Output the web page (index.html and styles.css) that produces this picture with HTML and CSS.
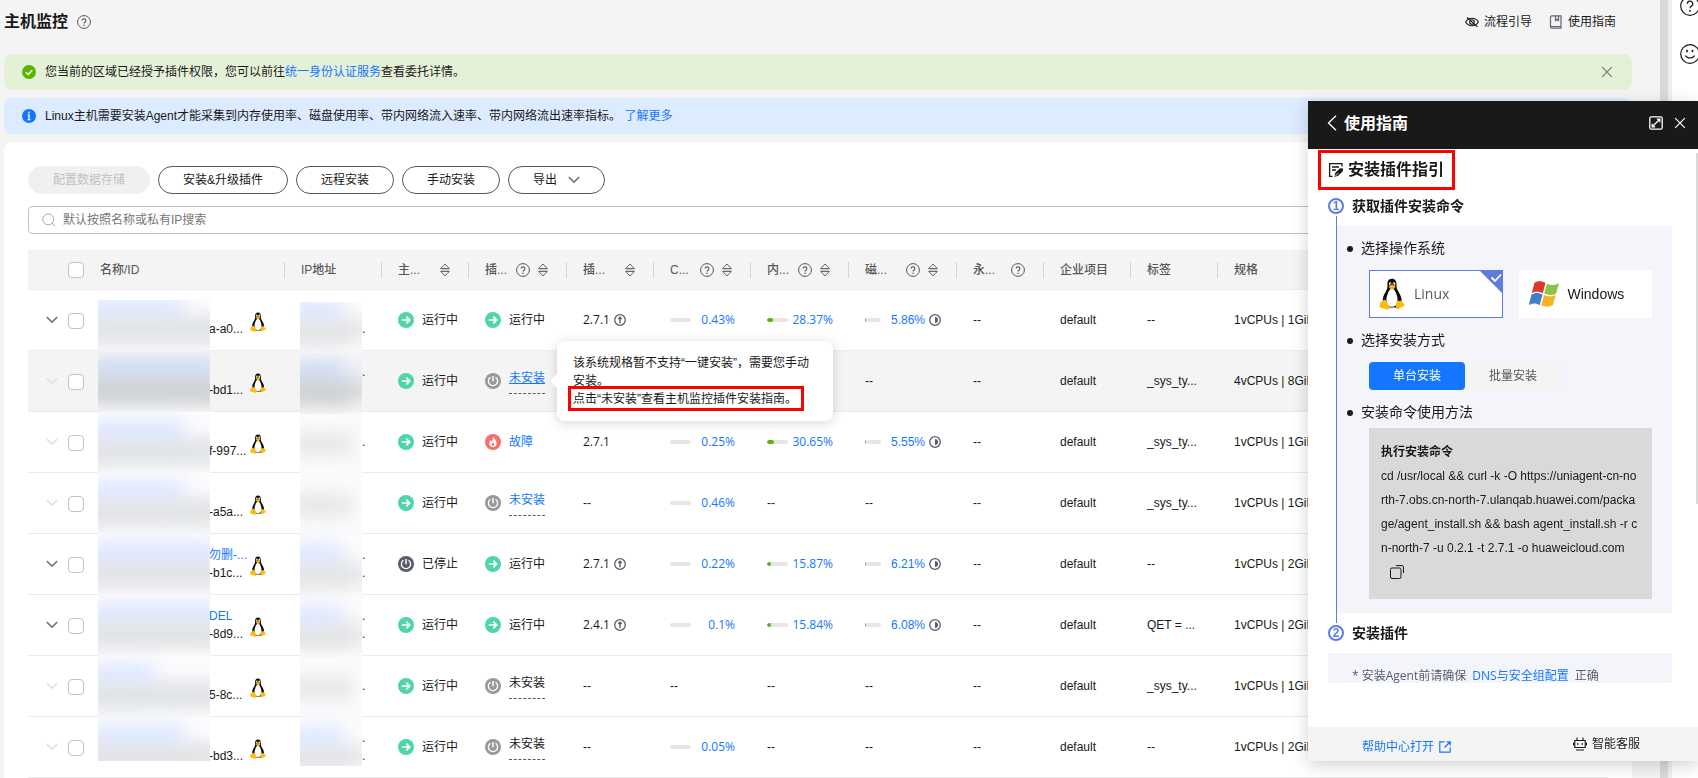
FILE: index.html
```
<!DOCTYPE html>
<html lang="zh-CN">
<head>
<meta charset="utf-8">
<title>主机监控</title>
<link rel="stylesheet" href="styles.css">
</head>
<body>
<svg class="sprite" aria-hidden="true">
  <symbol id="help" viewBox="0 0 14 14"><circle cx="7" cy="7" r="6.4" fill="none" stroke="currentColor"/><path d="M5.2 5.6a1.8 1.8 0 1 1 2.7 1.6c-.6.35-.9.7-.9 1.3" fill="none" stroke="currentColor" stroke-width="1.1"/><circle cx="7" cy="10.3" r=".75" fill="currentColor"/></symbol>
  <symbol id="sort" viewBox="0 0 10 14"><path d="M5 1 9.300 5.500H.7zM5 13 .7 8.500h8.600z" fill="none" stroke="currentColor" stroke-width=".9"/><path d="M.5 7h9" stroke="#aaa"/></symbol>
  <symbol id="down" viewBox="0 0 12 8"><path d="M.8 1.2 6 6.2l5.200-5" fill="none" stroke="currentColor" stroke-width="1.600"/></symbol>
  <symbol id="close" viewBox="0 0 12 12"><path d="M1.200 1.200l9.600 9.600M10.800 1.200 1.200 10.800" fill="none" stroke="currentColor" stroke-width="1.200"/></symbol>
  <symbol id="run" viewBox="0 0 16 16"><circle cx="8" cy="8" r="8" fill="#50d4ab"/><path d="M3.800 8h7.600M8.300 4.600 11.700 8l-3.400 3.400" fill="none" stroke="#fff" stroke-width="1.700"/></symbol>
  <symbol id="off" viewBox="0 0 16 16"><circle cx="8" cy="8" r="8" fill="currentColor"/><path d="M5.400 4.300a4.600 4.600 0 1 0 5.200 0" fill="none" stroke="#fff" stroke-width="1.300"/><path d="M8 3v5.200" stroke="#fff" stroke-width="1.500"/></symbol>
  <symbol id="fault" viewBox="0 0 16 16"><circle cx="8" cy="8" r="8" fill="#f66f6a"/><path d="M8.300 2.500c.3 2 3.400 3.700 3.400 6.800a3.700 3.700 0 0 1-7.400 0c0-1.600.9-2.700 1.600-3.300.2 1 .5 1.300.9 1.500.9-1.500 1.300-3 1.500-5z" fill="#fff"/><path d="M8.200 8.300c.2.9 1.100 1.200 1.100 2.300a1.300 1.300 0 0 1-2.600 0c0-1 .9-1.200 1.500-2.300z" fill="#f66f6a"/></symbol>
  <symbol id="up" viewBox="0 0 12 12"><circle cx="6" cy="6" r="5.300" fill="none" stroke="#575d6c" stroke-width="1.300"/><path d="M6 9.300V3.300M4.300 5 6 3.200 7.700 5" fill="none" stroke="#575d6c" stroke-width="1.400"/></symbol>
  <symbol id="half" viewBox="0 0 12 12"><circle cx="6" cy="6" r="5.300" fill="none" stroke="#575d6c" stroke-width="1.300"/><path d="M6 3a3 3 0 0 1 0 6z" fill="#575d6c"/></symbol>
  <symbol id="tux" viewBox="0 0 32 40"><path d="M16 1c-4.500 0-6 3.500-5.700 7.500.2 4-.3 5.500-2.300 9C5.500 21.500 4 25 4.500 30L10 37h12l6-7c.3-5-1.500-9-4-13-2-3.200-2.300-4.500-2.300-8.500C21.700 4 20 1 16 1z" fill="#0b0b0b"/><path d="M16 13c-3 1-4 3-5.200 6.500C9 24 8 28 10 33c3 4 9 4 12 0 1.800-4.500 1-9-.8-13.500C20 16 19 14 16 13z" fill="#fff"/><ellipse cx="13.700" cy="7.400" rx="1.600" ry="2.200" fill="#fff"/><ellipse cx="18.500" cy="7.400" rx="1.800" ry="2.200" fill="#fff"/><circle cx="14.200" cy="7.800" r=".8"/><circle cx="18" cy="7.800" r=".8"/><path d="M12 10.700c2-1.800 3.500-2.300 4.500-2 1.700.3 2.800 1 4 2-.8 2.500-2.700 3.800-4.500 3.800S12.700 13 12 10.700z" fill="#f5b30a"/><path d="M5.500 27.500c2.500-.8 3.500 1.500 5 4 1.400 2.400 3.600 4.400 2.500 6.500-1 2-4 1.300-6.500.3-2.200-.8-5.500-.8-6-2.300-.4-1.500.7-2.600.6-4.200 0-1.600 2-1.200 4.400-4.300zM21.500 31c.2-1.700 1-3.200 2.500-2.600 2 .9 3.700-.7 4.300.6.700 2 3.500 3 3.400 4.600-.2 1.500-3.200 2-5 3.600-1.700 1.500-3.700 2.300-5 .9-1.300-1.500-.4-4.500-.2-7.100z" fill="#fbbc0c"/></symbol>
</svg>

<main class="page">
  <header class="top">
    <h1>主机监控</h1>
    <svg class="i14 dim"><use href="#help"/></svg>
    <nav class="top-links">
      <a href="#"><svg class="i14" viewBox="0 0 14 14" fill="none" stroke="currentColor" stroke-width="1.100"><path d="M.6 7C3.500 2 10.500 2 13.400 7 10.500 12 3.500 12 .6 7z"/><circle cx="7" cy="7" r="2.300"/><path d="M2 2.500l10.500 9.300"/></svg>流程引导</a>
      <a href="#"><svg class="i14" viewBox="0 0 14 14" fill="none" stroke="#5f6570" stroke-width="1.200"><path d="M12 13.200H2.800A1.300 1.300 0 0 1 1.500 12V2A1.300 1.300 0 0 1 2.800.8H12zM1.500 11.500h10.500M6.500 1v4.500L8 4.300l1.500 1.200V1"/></svg>使用指南</a>
    </nav>
  </header>

  <section class="banner ok">
    <svg class="i14" viewBox="0 0 14 14"><circle cx="7" cy="7" r="7" fill="#5cb300"/><path d="M3.800 7.200 6.200 9.500l4.200-4.200" fill="none" stroke="#fff" stroke-width="1.400"/></svg>
    <p>您当前的区域已经授予插件权限，您可以前往<a href="#">统一身份认证服务</a>查看委托详情。</p>
    <button class="bare" aria-label="关闭"><svg class="i12"><use href="#close"/></svg></button>
  </section>
  <section class="banner info">
    <svg class="i14" viewBox="0 0 14 14"><circle cx="7" cy="7" r="7" fill="#1476ff"/><path d="M7 2.800v1.600M7 5.600v5.200M5.800 6h1.200M5.600 10.700h2.800" stroke="#fff" stroke-width="1.300"/></svg>
    <p>Linux主机需要安装Agent才能采集到内存使用率、磁盘使用率、带内网络流入速率、带内网络流出速率指标。 <a href="#">了解更多</a></p>
  </section>

  <section class="card">
    <div class="tools">
      <button class="pill" disabled>配置数据存储</button>
      <button class="pill">安装&amp;升级插件</button>
      <button class="pill">远程安装</button>
      <button class="pill">手动安装</button>
      <button class="pill">导出<svg class="chev"><use href="#down"/></svg></button>
    </div>
    <label class="search">
      <svg class="i14" viewBox="0 0 14 14" fill="none" stroke="#aaa"><circle cx="6.300" cy="6.300" r="5.500"/><path d="M10.200 10.200l3 3"/></svg>
      <input type="text" aria-label="搜索" placeholder="默认按照名称或私有IP搜索">
    </label>

    <div class="table-wrap">
      <table>
        <colgroup><col class="w-exp"><col class="w-chk"><col class="w-name"><col class="w-b"><col class="w-a"><col class="w-c"><col class="w-a"><col class="w-b"><col class="w-c"><col class="w-d"><col class="w-a"><col class="w-a"><col class="w-a"><col></colgroup>
        <thead>
          <tr>
            <th></th>
            <th class="chk"><input type="checkbox" aria-label="全选"></th>
            <th><div>名称/ID</div></th>
            <th><div>IP地址</div></th>
            <th><div>主...<span></span><svg class="sort"><use href="#sort"/></svg></div></th>
            <th><div>插...<span></span><svg class="i14"><use href="#help"/></svg><svg class="sort"><use href="#sort"/></svg></div></th>
            <th><div>插...<span></span><svg class="sort"><use href="#sort"/></svg></div></th>
            <th><div>C...<span></span><svg class="i14"><use href="#help"/></svg><svg class="sort"><use href="#sort"/></svg></div></th>
            <th><div>内...<span></span><svg class="i14"><use href="#help"/></svg><svg class="sort"><use href="#sort"/></svg></div></th>
            <th><div>磁...<span></span><svg class="i14"><use href="#help"/></svg><svg class="sort"><use href="#sort"/></svg></div></th>
            <th><div>永...<span></span><svg class="i14"><use href="#help"/></svg></div></th>
            <th><div>企业项目</div></th>
            <th><div>标签</div></th>
            <th class="last"><div>规格</div></th>
          </tr>
        </thead>
        <tbody>
          <tr>
            <td class="exp on"><svg class="chev"><use href="#down"/></svg></td>
            <td class="chk"><input type="checkbox" aria-label="选择主机1"></td>
            <td class="name"><div><p><br>a-a0...</p><svg class="tux"><use href="#tux"/></svg></div></td>
            <td class="ip"><br>.</td>
            <td><div class="st"><svg class="i16"><use href="#run"/></svg>运行中</div></td>
            <td><div class="st"><svg class="i16"><use href="#run"/></svg>运行中</div></td>
            <td><div class="ver">2.7.1<svg class="i12"><use href="#up"/></svg></div></td>
            <td><div class="use cpu"><i></i><a href="#">0.43%</a></div></td>
            <td><div class="use mem"><i><b style="width:28%"></b></i><a href="#">28.37%</a></div></td>
            <td><div class="use disk"><i><b style="width:6%"></b></i><a href="#">5.86%</a><svg class="i12"><use href="#half"/></svg></div></td>
            <td>--</td><td>default</td><td>--</td><td>1vCPUs | 1GiB</td>
          </tr>
          <tr class="hover">
            <td class="exp"><svg class="chev"><use href="#down"/></svg></td>
            <td class="chk"><input type="checkbox" aria-label="选择主机2"></td>
            <td class="name"><div><p><br>-bd1...</p><svg class="tux"><use href="#tux"/></svg></div></td>
            <td class="ip">.<br>&nbsp;</td>
            <td><div class="st"><svg class="i16"><use href="#run"/></svg>运行中</div></td>
            <td><div class="st"><svg class="i16 gray"><use href="#off"/></svg><span class="dash"><a class="lined" href="#">未安装</a></span>
              <div class="pop" role="tooltip">该系统规格暂不支持“一键安装”，需要您手动安装。<br>点击“未安装”查看主机监控插件安装指南。<span class="mark"></span></div></div></td>
            <td></td><td></td><td></td><td>--</td>
            <td>--</td><td>default</td><td>_sys_ty...</td><td>4vCPUs | 8GiB</td>
          </tr>
          <tr>
            <td class="exp"><svg class="chev"><use href="#down"/></svg></td>
            <td class="chk"><input type="checkbox" aria-label="选择主机3"></td>
            <td class="name"><div><p><br>f-997...</p><svg class="tux"><use href="#tux"/></svg></div></td>
            <td class="ip">.</td>
            <td><div class="st"><svg class="i16"><use href="#run"/></svg>运行中</div></td>
            <td><div class="st"><svg class="i16"><use href="#fault"/></svg><a href="#">故障</a></div></td>
            <td><div class="ver">2.7.1</div></td>
            <td><div class="use cpu"><i></i><a href="#">0.25%</a></div></td>
            <td><div class="use mem"><i><b style="width:31%"></b></i><a href="#">30.65%</a></div></td>
            <td><div class="use disk"><i><b style="width:6%"></b></i><a href="#">5.55%</a><svg class="i12"><use href="#half"/></svg></div></td>
            <td>--</td><td>default</td><td>_sys_ty...</td><td>1vCPUs | 1GiB</td>
          </tr>
          <tr>
            <td class="exp"><svg class="chev"><use href="#down"/></svg></td>
            <td class="chk"><input type="checkbox" aria-label="选择主机4"></td>
            <td class="name"><div><p><br>-a5a...</p><svg class="tux"><use href="#tux"/></svg></div></td>
            <td></td>
            <td><div class="st"><svg class="i16"><use href="#run"/></svg>运行中</div></td>
            <td><div class="st"><svg class="i16 gray"><use href="#off"/></svg><span class="dash"><a href="#">未安装</a></span></div></td>
            <td>--</td>
            <td><div class="use cpu"><i></i><a href="#">0.46%</a></div></td>
            <td>--</td><td>--</td>
            <td>--</td><td>default</td><td>_sys_ty...</td><td>1vCPUs | 1GiB</td>
          </tr>
          <tr>
            <td class="exp on"><svg class="chev"><use href="#down"/></svg></td>
            <td class="chk"><input type="checkbox" aria-label="选择主机5"></td>
            <td class="name"><div><p><a href="#">勿删-...</a><br>-b1c...</p><svg class="tux"><use href="#tux"/></svg></div></td>
            <td class="ip">.<br>.</td>
            <td><div class="st"><svg class="i16 dark"><use href="#off"/></svg>已停止</div></td>
            <td><div class="st"><svg class="i16"><use href="#run"/></svg>运行中</div></td>
            <td><div class="ver">2.7.1<svg class="i12"><use href="#up"/></svg></div></td>
            <td><div class="use cpu"><i></i><a href="#">0.22%</a></div></td>
            <td><div class="use mem"><i><b style="width:16%"></b></i><a href="#">15.87%</a></div></td>
            <td><div class="use disk"><i><b style="width:6%"></b></i><a href="#">6.21%</a><svg class="i12"><use href="#half"/></svg></div></td>
            <td>--</td><td>default</td><td>--</td><td>1vCPUs | 2GiB</td>
          </tr>
          <tr>
            <td class="exp on"><svg class="chev"><use href="#down"/></svg></td>
            <td class="chk"><input type="checkbox" aria-label="选择主机6"></td>
            <td class="name"><div><p><a href="#">DEL</a><br>-8d9...</p><svg class="tux"><use href="#tux"/></svg></div></td>
            <td class="ip">.<br>.</td>
            <td><div class="st"><svg class="i16"><use href="#run"/></svg>运行中</div></td>
            <td><div class="st"><svg class="i16"><use href="#run"/></svg>运行中</div></td>
            <td><div class="ver">2.4.1<svg class="i12"><use href="#up"/></svg></div></td>
            <td><div class="use cpu"><i></i><a href="#">0.1%</a></div></td>
            <td><div class="use mem"><i><b style="width:16%"></b></i><a href="#">15.84%</a></div></td>
            <td><div class="use disk"><i><b style="width:6%"></b></i><a href="#">6.08%</a><svg class="i12"><use href="#half"/></svg></div></td>
            <td>--</td><td>default</td><td>QET = ...</td><td>1vCPUs | 2GiB</td>
          </tr>
          <tr>
            <td class="exp"><svg class="chev"><use href="#down"/></svg></td>
            <td class="chk"><input type="checkbox" aria-label="选择主机7"></td>
            <td class="name"><div><p><br>5-8c...</p><svg class="tux"><use href="#tux"/></svg></div></td>
            <td class="ip">.</td>
            <td><div class="st"><svg class="i16"><use href="#run"/></svg>运行中</div></td>
            <td><div class="st"><svg class="i16 gray"><use href="#off"/></svg><span class="dash">未安装</span></div></td>
            <td>--</td><td>--</td><td>--</td><td>--</td>
            <td>--</td><td>default</td><td>_sys_ty...</td><td>1vCPUs | 1GiB</td>
          </tr>
          <tr>
            <td class="exp"><svg class="chev"><use href="#down"/></svg></td>
            <td class="chk"><input type="checkbox" aria-label="选择主机8"></td>
            <td class="name"><div><p><br>-bd3...</p><svg class="tux"><use href="#tux"/></svg></div></td>
            <td class="ip">.<br>.</td>
            <td><div class="st"><svg class="i16"><use href="#run"/></svg>运行中</div></td>
            <td><div class="st"><svg class="i16 gray"><use href="#off"/></svg><span class="dash">未安装</span></div></td>
            <td>--</td>
            <td><div class="use cpu"><i></i><a href="#">0.05%</a></div></td>
            <td>--</td><td>--</td>
            <td>--</td><td>default</td><td>--</td><td>1vCPUs | 2GiB</td>
          </tr>
        </tbody>
      </table>
      <div class="veil veil-name" aria-hidden="true">
        <div><i class="m"></i><b></b></div><div class="deep"><i class="l"></i><b></b></div><div><i class="m"></i><b></b></div><div><i class="m"></i><b></b></div><div><i class="l"></i><b></b></div><div><i class="l"></i><b></b></div><div><i class="s"></i><b></b></div><div><i class="m"></i><b></b></div>
      </div>
      <div class="veil veil-ip" aria-hidden="true">
        <div><i class="m"></i><b></b></div><div class="deep"><i class="m"></i><b></b></div><div class="one"><b></b></div><div class="one"><b></b></div><div><i class="m"></i><b></b></div><div><i class="m"></i><b></b></div><div class="one"><b></b></div><div><i class="m"></i><b></b></div>
      </div>
    </div>
  </section>
</main>
<div class="track" aria-hidden="true"></div>
<aside class="rail">
  <svg viewBox="0 0 20 20"><circle cx="10" cy="10" r="9.300" fill="none" stroke="#191919" stroke-width="1.200"/><path d="M7.300 7.800a2.700 2.700 0 1 1 4 2.400c-.9.500-1.300 1-1.300 2" fill="none" stroke="#191919" stroke-width="1.300"/><circle cx="10" cy="14.800" r=".9"/></svg>
  <svg viewBox="0 0 20 20"><circle cx="10" cy="10" r="9.300" fill="none" stroke="#191919" stroke-width="1.200"/><path d="M5.500 11.500c1.500 3.300 7.500 3.300 9 0" fill="none" stroke="#191919" stroke-width="1.200"/><path d="M7 5.800v2.400M12.500 5.800v2.400" stroke="#191919" stroke-width="1.600"/></svg>
</aside>

<aside class="guide">
  <header class="guide-head">
    <button class="bare" aria-label="返回"><svg class="back" viewBox="0 0 10 16"><path d="M9 .8 1.500 8 9 15.200" fill="none" stroke="#fff" stroke-width="1.300"/></svg></button>
    <h2>使用指南</h2>
    <button class="bare" aria-label="展开"><svg class="i14" viewBox="0 0 14 14" fill="none" stroke="#fff" stroke-width="1.300"><rect x=".8" y=".8" width="12.400" height="12.400" rx="1.500"/><path d="M7.800 3.200h3v3M6.200 10.800h-3v-3M10.500 3.500 3.500 10.500"/></svg></button>
    <button class="bare" aria-label="关闭"><svg class="i12"><use href="#close"/></svg></button>
  </header>
  <div class="guide-body">
    <h3><svg class="i16" viewBox="0 0 16 16"><path d="M14 4.500V1.600H1.600v12.800H4.500M4 5h7M4 8h4" fill="none" stroke="#191919" stroke-width="1.300"/><path d="M6.300 15l1-4.200L12 6.200l3.200.2-.6 3.200-4.400 4.200z" fill="#191919"/><path d="M7 14.400l3.200-3.200" stroke="#fff" stroke-width=".9"/></svg>安装插件指引</h3>
    <div class="step"><span class="num">1</span><h4>获取插件安装命令</h4></div>
    <div class="step-body">
      <h5>选择操作系统</h5>
      <div class="os-list">
        <button class="os sel"><svg class="tux-l"><use href="#tux"/></svg>Linux<svg class="corner" viewBox="0 0 24 24"><path d="M0 0h24v24z" fill="#5e7ce0"/><path d="M12.500 7.500l3.500 3.500 6-6.500" fill="none" stroke="#fff" stroke-width="1.800"/></svg></button>
        <button class="os"><svg class="win" viewBox="0 0 30 26"><path d="M5.500 1.800C9-.5 13 0 16.500 1.800l-2.700 10.400C10.500 10.300 6.500 10 2.800 12.200z" fill="#dc3832"/><path d="M18 2.800c4 1.800 8 1.600 12-.6l-2.800 10.200c-4 2.200-8 2-12 .1z" fill="#8fc048"/><path d="M2.500 13.500c3.700-2.200 7.500-2 11 0L10.800 24C7.500 22 3.500 21.800-.2 24z" fill="#3f7fc4"/><path d="M15 14c3.800 2 7.800 2 11.800-.2L24 24c-3.800 2.200-8 2.200-11.700.2z" fill="#f6b324"/></svg>Windows</button>
      </div>
      <h5>选择安装方式</h5>
      <div class="modes"><button class="sel">单台安装</button><button>批量安装</button></div>
      <h5 class="tight">安装命令使用方法</h5>
      <div class="cmd">
        <strong>执行安装命令</strong>
        <p>cd /usr/local &amp;&amp; curl -k -O https://uniagent-cn-north-7.obs.cn-north-7.ulanqab.huawei.com/package/agent_install.sh &amp;&amp; bash agent_install.sh -r cn-north-7 -u 0.2.1 -t 2.7.1 -o huaweicloud.com</p>
        <button class="bare" aria-label="复制"><svg class="i14" viewBox="0 0 14 14" fill="none" stroke="#191919"><rect x=".5" y="3" width="10.500" height="10.500" rx="1.500"/><path d="M6 .6h6a1.500 1.500 0 0 1 1.500 1.500V8"/></svg></button>
      </div>
    </div>
    <div class="step"><span class="num">2</span><h4>安装插件</h4></div>
    <p class="note">* 安装Agent前请确保 <a href="#">DNS与安全组配置</a> 正确</p>
  </div>
  <footer class="guide-foot">
    <a href="#">帮助中心打开<svg class="i12" viewBox="0 0 12 12" fill="none" stroke="currentColor" stroke-width="1.200"><path d="M5.500.8H.8v10.400h10.400V6.500M7.500.8h3.700v3.700M11 1 5.500 6.500"/></svg></a>
    <button class="bare"><svg class="i14" viewBox="0 0 14 14" fill="none" stroke="#191919" stroke-width="1.100"><path d="M1.800 3.500h10.400v7H1.800zM.5 5.500v3M13.500 5.500v3M4 3.500V.5M10 3.500V.5M4.800 6v2M9.200 6v2M3 13h8"/></svg>智能客服</button>
  </footer>
  <span class="thumb"></span>
</aside>
</body>
</html>
```
FILE: styles.css
```
* { box-sizing: border-box; }
body {
  margin: 0;
  height: 100vh;
  display: flex;
  overflow: hidden;
  background: #f4f4f4;
  color: #191919;
  font: 12px/18px "Liberation Sans", "Noto Sans CJK SC", sans-serif;
}
h1, h2, h3, h4, h5, p { margin: 0; }
a { color: #1476ff; text-decoration: none; }
svg { display: block; flex: none; }
button, input { font: inherit; color: inherit; }
button { cursor: pointer; }
.sprite { position: absolute; width: 0; height: 0; }
.bare { padding: 0; border: 0; background: none; }
.i12 { width: 12px; height: 12px; }
.i14 { width: 14px; height: 14px; }
.i16 { width: 16px; height: 16px; }
.chev { width: 12px; height: 8px; }
.sort { width: 10px; height: 14px; }
.dim { color: #575757; }
.gray { color: #999; }
.dark { color: #575d6c; }

.page { flex: 1; min-width: 0; padding: 0 28px 0 4px; display: flex; flex-direction: column; gap: 8px; }
.top { height: 46px; display: flex; align-items: center; gap: 9px; padding: 0 16px 2px 0; }
.top h1 { font-size: 16px; line-height: 24px; font-weight: 700; }
.top-links { margin-left: auto; display: flex; gap: 17px; }
.top-links a { display: flex; align-items: center; gap: 5px; color: #191919; }
.banner { height: 36px; flex: none; display: flex; align-items: center; gap: 9px; padding: 0 19px 0 18px; border-radius: 8px; }
.banner .bare { margin-left: auto; color: #777; }
.ok { background: #e5f1d7; }
.info { background: #dcebff; }

.card { flex: 1 0 auto; background: #fff; border-radius: 8px 8px 0 0; padding: 24px 24px 0; }
.tools { display: flex; gap: 8px; }
.pill { height: 28px; padding: 0 24px; border: 1px solid #575757; border-radius: 14px; background: #fff; display: flex; align-items: center; gap: 11px; white-space: nowrap; }
.pill:disabled { background: #f0f0f0; border-color: #f0f0f0; color: #c2c2c2; }
.pill .chev { color: #777; }
.search { margin-top: 12px; height: 28px; display: flex; align-items: center; gap: 7px; padding: 0 13px; border: 1px solid #c2c2c2; border-radius: 4px; }
.search input { flex: 1; border: 0; outline: 0; padding: 0; background: none; }
.search input::placeholder { color: #777; opacity: 1; }

.table-wrap { position: relative; margin-top: 16px; }
table { width: 100%; table-layout: fixed; border-collapse: separate; border-spacing: 0; }
.w-exp { width: 32px; }
.w-chk { width: 24px; }
.w-name { width: 201px; }
.w-a { width: 87px; }
.w-b { width: 97px; }
.w-c { width: 98px; }
.w-d { width: 108px; }
th { height: 40px; padding: 0; background: #f4f4f4; border-bottom: 1px solid #ebebeb; font-weight: 500; text-align: left; color: #575757; }
th div { height: 16px; display: flex; align-items: center; gap: 8px; padding: 0 18px 0 16px; border-right: 1px solid #d4d4d4; white-space: nowrap; }
th span { margin-left: auto; }
th .i14 { margin-left: -8px; }
th.last div { border-right: 0; }
td { height: 61px; padding: 0 16px; border-bottom: 1px solid #ebebeb; white-space: nowrap; }
td:last-child { overflow: hidden; }
.hover td { background: #f4f4f4; }
.exp { padding: 0 2px 0 18px; color: #dfe1e6; }
.exp.on { color: #777; }
.chk { padding: 0 0 0 8px; }
.chk input { appearance: none; display: block; width: 16px; height: 16px; margin: 0; border: 1px solid #c2c2c2; border-radius: 4px; background: #fff; }
td.chk { padding-top: 1px; }
.name { padding: 0 19px 0 125px; }
.name div { display: flex; align-items: center; justify-content: space-between; }
.name .tux { margin-top: 4px; }
.tux { width: 16px; height: 20px; }
.ip { padding-left: 77px; }
.st { position: relative; display: flex; align-items: center; gap: 8px; }
.dash { padding-bottom: 6px; border-bottom: 1px dashed #575d6c; }
.lined { text-decoration: underline; }
.ver { display: flex; align-items: center; gap: 4px; font-family: "Open Sans", "Noto Sans CJK SC", sans-serif; }
.use { display: flex; align-items: center; justify-content: space-between; gap: 4px; }
.use i { width: 21px; height: 4px; border-radius: 2px; background: #e6e6e6; overflow: hidden; }
.use b { display: block; height: 4px; min-width: 1px; border-radius: 2px; background: #5cb300; }
.cpu, .mem { font-family: "Open Sans", "Noto Sans CJK SC", sans-serif; }
.mem b { min-width: 4px; }
.disk i { width: 16px; margin-right: auto; }

.pop { position: absolute; z-index: 3; left: 72px; top: 50%; transform: translateY(-50%); width: 276px; padding: 13px 16px; border-radius: 8px; background: #fff; box-shadow: 0 2px 12px rgba(0, 0, 0, .16); white-space: normal; }
.pop::before { content: ""; position: absolute; left: -5px; top: 50%; width: 10px; height: 10px; margin-top: -5px; background: #fff; transform: rotate(45deg); }
.mark { position: absolute; left: 11px; right: 29px; bottom: 10px; height: 25px; border: 3px solid #f00; }

.veil { position: absolute; overflow: hidden; background: #fcfcfd; }
.veil-name { left: 70px; top: 50px; width: 112px; height: 461px; }
.veil-ip { left: 272px; top: 52px; width: 62px; height: 464px; }
.veil div { position: relative; height: 61px; background: linear-gradient(#fcfcfd, #fbfbfd 25%, #ebecef 62%, #f5f5f5 85%, #fcfcfd); }
.veil div:first-child { margin-top: -10px; }
.veil i, .veil b { position: absolute; left: -10px; filter: blur(9px); }
.veil i { top: 8px; height: 24px; background: #dde7ff; }
.veil b { top: 30px; height: 20px; right: -10px; background: #e0e2e4; }
.veil .s { width: 66px; }
.veil .m { width: 86%; }
.veil .l { right: -10px; }
.veil .deep { background: linear-gradient(#f6f6f7, #eceef3 30%, #dcdee0 62%, #ededed 85%, #f8f8f8); }
.veil .deep i { background: #d0dcf4; }
.veil .deep b { background: #cccfd3; }
.veil-ip b { background: #e4e4e6; right: 10px; }
.veil .one { background: #fbfbfc; }
.veil .one b { top: 20px; }

.track { width: 12px; background: #d9d9d9; border-right: 4px solid #efefef; }
.rail { width: 26px; padding: 0 0 0 8px; background: #fff; overflow: hidden; display: flex; flex-direction: column; gap: 28px; }
.rail svg { width: 20px; height: 20px; }
.rail svg:first-child { margin-top: -4px; }

.guide { position: fixed; z-index: 5; top: 101px; right: 0; width: 390px; background: #fff; box-shadow: 0 4px 16px rgba(0, 0, 0, .18); }
.guide-head { height: 48px; display: flex; align-items: center; gap: 11px; padding: 0 12px 4px 19px; background: #191919; color: #fff; }
.guide-head h2 { flex: 1; margin: 2px 0 0 -4px; font-size: 16px; line-height: 24px; font-weight: 700; }
.back { width: 10px; height: 16px; }
.guide-body { padding: 1px 26px 44px 20px; }
.guide-body h3 { display: flex; align-items: center; gap: 4px; width: 137px; height: 40px; margin-left: -10px; padding-left: 7px; border: 3px solid #f00; font-size: 16px; font-weight: 700; white-space: nowrap; }
.step { display: flex; align-items: center; gap: 8px; }
.num { width: 16px; height: 16px; border: 2px solid #5e7ce0; border-radius: 8px; color: #5e7ce0; font-size: 12px; line-height: 12px; font-weight: 700; text-align: center; }
.step h4 { font-size: 14px; line-height: 20px; font-weight: 700; }
.guide-body h3 + .step { margin: 6px 0 0; }
.step-body { position: relative; margin: 10px 0 10px 8px; padding: 12px 20px 14px 32px; background: #f4f5fb; border-left: 1px solid #5e7ce0; }
.step-body::before, .step-body::after { content: ""; position: absolute; left: -1px; width: 1px; height: 10px; background: #5e7ce0; }
.step-body::before { top: -10px; }
.step-body::after { bottom: -10px; }
.step-body h5 { position: relative; margin: 0 0 12px -8px; font-size: 14px; line-height: 20px; font-weight: 400; }
.step-body h5::before { content: ""; position: absolute; left: -14px; top: 8px; width: 6px; height: 6px; border-radius: 3px; background: #191919; }
.step-body h5.tight { margin-bottom: 6px; }
.os-list { display: grid; grid-template-columns: 1fr 1fr; gap: 16px; margin-bottom: 12px; }
.os { position: relative; height: 48px; display: flex; align-items: center; gap: 9px; padding: 0 9px; border: 1px solid #fff; background: #fff; font-size: 14px; }
.os.sel { border-color: #5e7ce0; color: #575757; font-family: "Open Sans", sans-serif; }
.tux-l { width: 26px; height: 32px; }
.corner { position: absolute; top: -1px; right: -1px; width: 24px; height: 24px; }
.win { width: 30px; height: 26px; }
.modes { display: flex; margin-bottom: 12px; }
.modes button { width: 96px; height: 28px; border: 0; border-radius: 4px; background: #f4f4f4; color: #575757; }
.modes .sel { background: #1476ff; color: #fff; }
.cmd { padding: 12px 12px 17px; background: #d9d9d9; line-height: 24px; }
.cmd strong { display: block; }
.cmd p { word-break: break-all; margin-bottom: 5px; }
.cmd .bare { display: block; margin: 0 0 3px 9px; }
.note { margin-top: 10px; padding: 14px 0 0 24px; height: 30px; overflow: hidden; background: #f4f5fb; color: #575d6c; font-family: "Open Sans", "Noto Sans CJK SC", sans-serif; }
.note a { margin: 0 3px; }
.guide-foot { height: 34px; display: flex; justify-content: space-between; align-items: center; padding: 0 58px 0 54px; background: #f4f4f4; }
.guide-foot a, .guide-foot button { display: flex; align-items: center; gap: 5px; }
.guide-foot a { padding-top: 6px; }
.thumb { position: absolute; top: 52px; right: 0; width: 2px; height: 351px; background: #d9d9d9; }
```
